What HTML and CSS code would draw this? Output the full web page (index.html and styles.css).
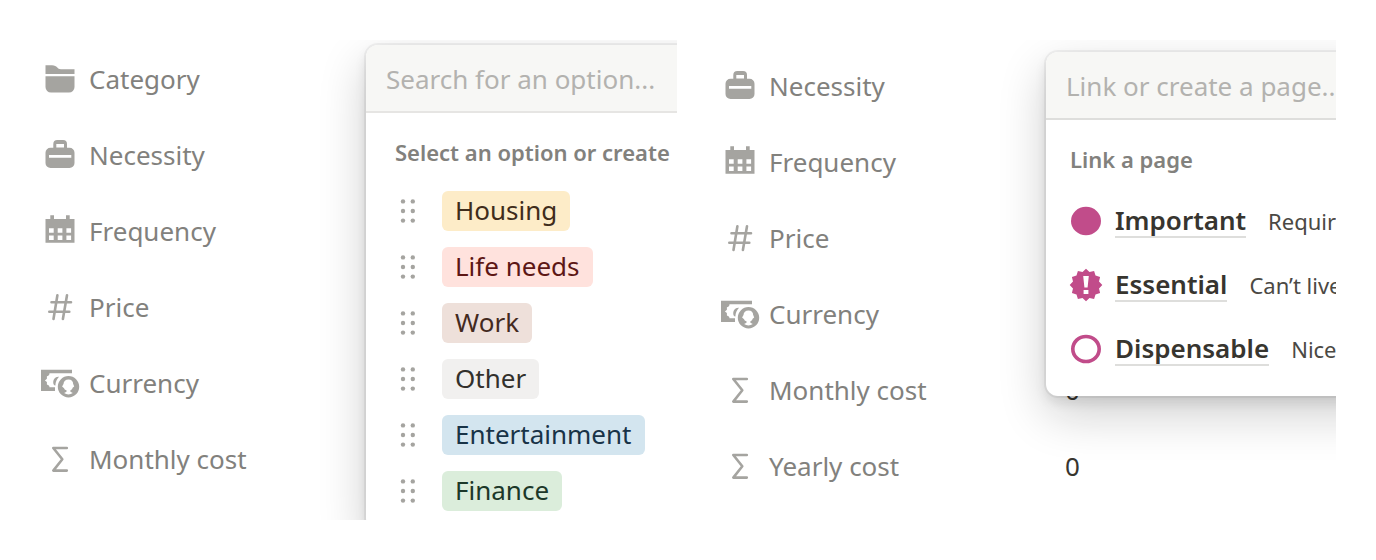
FILE: index.html
```
<!DOCTYPE html>
<html lang="en">
<head>
    <meta charset="UTF-8">
    <meta name="viewport" content="width=device-width, initial-scale=1.0">
    <title>Expense properties</title>
    <link rel="stylesheet" href="styles.css">
</head>
<body>
    <!-- Icons shared by both panels -->
    <svg class="sprite" aria-hidden="true">
        <symbol id="icon-folder" viewBox="0 0 40 40">
            <path d="M5.5 5.3H12c5.500 0 5 4 9 4h13.500V14h-29z"/>
            <path d="M5.5 16.200h29V27a5.500 5.500 0 0 1-5.500 5.500H11A5.500 5.500 0 0 1 5.500 27z"/>
        </symbol>
        <symbol id="icon-briefcase" viewBox="0 0 40 40">
            <path fill-rule="evenodd" d="M13.300 11.700V8a4 4 0 0 1 4-4H23a4 4 0 0 1 4 4v3.700h2.500a5 5 0 0 1 5 5V27a5 5 0 0 1-5 5h-19a5 5 0 0 1-5-5V16.700a5 5 0 0 1 5-5zM16.300 8v3.500h7.700V8zM9 19v2.700h22.300V19z"/>
        </symbol>
        <symbol id="icon-calendar" viewBox="0 0 40 40">
            <path fill-rule="evenodd" d="M5.500 7h4.800V3.200H14V7h12V3.200h3.700V7h4.800v23.700h-29zM9 16.200v4.500h4.700v-4.500zM17.700 16.200v4.500h4.700v-4.500zM26.400 16.200v4.500h4.700v-4.500zM9 23.600v4.400h4.700v-4.400zM17.700 23.600v4.400h4.700v-4.400zM26.400 23.600v4.400h4.700v-4.400z"/>
        </symbol>
        <symbol id="icon-hash" viewBox="0 0 40 40">
            <path class="line" d="M11.500 14.200H31M9.300 23.700H29.300M17.400 7.300 13.500 31M27 7.300 22.900 31"/>
        </symbol>
        <symbol id="icon-money" viewBox="0 0 40 40">
            <path fill-rule="evenodd" d="M1 5.700h31v3.600H9.500c0 1.700-1 2.700-2.600 3v2.400l-2 1.700 2 1.700v2.300c1.600.4 2.600 1.300 2.600 2.900h5.500v3.700H1z"/>
            <path d="M19 12.700c-3.500-.5-6.500 2.500-5.600 7 .3 1.200 1.200 1.700 2 1.800.1-3.300 1.300-6.500 3.600-8.800z"/>
            <path fill-rule="evenodd" d="M28.500 12a10.700 10.700 0 1 1 0 21.400 10.700 10.700 0 0 1 0-21.400zm0 3.400c-3 0-5 2-5 4.600l-1.400 2.500 2 1.800c.5 1.400 1.400 1.800 2.400 2v1.400l-2.400 1.400c2.700 1.700 6 1.700 8.700 0l-2.400-1.400v-1.500c1.400-.5 2-1.400 2.200-2.400l1.600-1.300-1-2.500c0-2.600-1.700-4.600-4.700-4.600z"/>
        </symbol>
        <symbol id="icon-sigma" viewBox="0 0 40 40">
            <path class="line" d="M26.800 8H13.300l9 11.300-9 11.300h13.500"/>
        </symbol>
        <symbol id="icon-handle" viewBox="0 0 16 26">
            <circle cx="3" cy="3.400" r="2.200"/><circle cx="12.800" cy="3.400" r="2.200"/>
            <circle cx="3" cy="13" r="2.200"/><circle cx="12.800" cy="13" r="2.200"/>
            <circle cx="3" cy="22.600" r="2.200"/><circle cx="12.800" cy="22.600" r="2.200"/>
        </symbol>
    </svg>

    <main class="panels">
        <section class="panel">
            <ul class="properties">
                <li class="property"><svg class="icon"><use href="#icon-folder"/></svg>Category</li>
                <li class="property"><svg class="icon"><use href="#icon-briefcase"/></svg>Necessity</li>
                <li class="property"><svg class="icon"><use href="#icon-calendar"/></svg>Frequency</li>
                <li class="property"><svg class="icon"><use href="#icon-hash"/></svg>Price</li>
                <li class="property"><svg class="icon"><use href="#icon-money"/></svg>Currency</li>
                <li class="property"><svg class="icon"><use href="#icon-sigma"/></svg>Monthly cost</li>
            </ul>

            <div class="popover">
                <input class="search" type="text" placeholder="Search for an option..." aria-label="Search for an option">
                <div class="popover-body options-body">
                    <h2 class="popover-title">Select an option or create</h2>
                    <ul class="options">
                        <li class="option">
                            <button class="handle" type="button" aria-label="Move Housing"><svg><use href="#icon-handle"/></svg></button>
                            <span class="tag yellow">Housing</span>
                        </li>
                        <li class="option">
                            <button class="handle" type="button" aria-label="Move Life needs"><svg><use href="#icon-handle"/></svg></button>
                            <span class="tag red">Life needs</span>
                        </li>
                        <li class="option">
                            <button class="handle" type="button" aria-label="Move Work"><svg><use href="#icon-handle"/></svg></button>
                            <span class="tag brown">Work</span>
                        </li>
                        <li class="option">
                            <button class="handle" type="button" aria-label="Move Other"><svg><use href="#icon-handle"/></svg></button>
                            <span class="tag gray">Other</span>
                        </li>
                        <li class="option">
                            <button class="handle" type="button" aria-label="Move Entertainment"><svg><use href="#icon-handle"/></svg></button>
                            <span class="tag blue">Entertainment</span>
                        </li>
                        <li class="option">
                            <button class="handle" type="button" aria-label="Move Finance"><svg><use href="#icon-handle"/></svg></button>
                            <span class="tag green">Finance</span>
                        </li>
                    </ul>
                </div>
            </div>
        </section>

        <section class="panel panel-link">
            <ul class="properties">
                <li class="property"><svg class="icon"><use href="#icon-briefcase"/></svg>Necessity</li>
                <li class="property"><svg class="icon"><use href="#icon-calendar"/></svg>Frequency</li>
                <li class="property"><svg class="icon"><use href="#icon-hash"/></svg>Price</li>
                <li class="property"><svg class="icon"><use href="#icon-money"/></svg>Currency</li>
                <li class="property"><svg class="icon"><use href="#icon-sigma"/></svg>Monthly cost <span class="value">0</span></li>
                <li class="property"><svg class="icon"><use href="#icon-sigma"/></svg>Yearly cost <span class="value">0</span></li>
            </ul>

            <div class="popover popover-link">
                <input class="search" type="text" placeholder="Link or create a page..." aria-label="Link or create a page">
                <div class="popover-body">
                    <h2 class="popover-title">Link a page</h2>
                    <ul class="pages">
                        <li class="page">
                            <svg class="page-icon" viewBox="0 0 34 34"><ellipse cx="17" cy="17" rx="15" ry="14.300"/></svg>
                            <a class="page-link" href="#">Important</a>
                            <span class="note">Requir</span>
                        </li>
                        <li class="page">
                            <svg class="page-icon" viewBox="0 0 34 34">
                                <path d="M17 .7 20.500 4 25.100 2.900 26.500 7.500 31.100 8.900 30 13.500 33.300 17 30 20.500 31.100 25.100 26.500 26.500 25.100 31.100 20.500 30 17 33.300 13.500 30 8.900 31.100 7.500 26.500 2.900 25.100 4 20.500.7 17 4 13.500 2.900 8.900 7.500 7.500 8.900 2.900 13.500 4z"/>
                                <path class="mark" d="M14.200 8h5.600l-1.200 11.500h-3.200zM14.600 22h4.800v4h-4.800z"/>
                            </svg>
                            <a class="page-link" href="#">Essential</a>
                            <span class="note">Can’t live</span>
                        </li>
                        <li class="page">
                            <svg class="page-icon" viewBox="0 0 34 34"><ellipse class="ring" cx="17" cy="17" rx="13.200" ry="12.500"/></svg>
                            <a class="page-link" href="#">Dispensable</a>
                            <span class="note">Nice</span>
                        </li>
                    </ul>
                </div>
            </div>
        </section>
    </main>
</body>
</html>
```
FILE: styles.css
```
* {
    box-sizing: border-box;
}

body {
    margin: 0;
    background-color: #fff;
    color: #37352f;
    font-family: "Noto Sans", "Open Sans", sans-serif;
    font-size: 26px;
    line-height: 38px;
}

ul {
    list-style: none;
    margin: 0;
    padding: 0;
}

.sprite {
    display: none;
}

.panels {
    display: grid;
    grid-template-columns: 677fr 656fr;
    gap: 3px;
    padding: 40px 40px 40px 0;
}

.panel {
    position: relative;
    overflow: hidden;
    padding: 2px 0 22px 40px;
    white-space: nowrap;
}

.panel-link {
    padding: 9px 0 15px 40px;
}

/* Property list */
.property {
    display: flex;
    align-items: center;
    gap: 9px;
    height: 76px;
    padding-bottom: 2px;
    color: #82817d;
}

.icon {
    width: 40px;
    height: 40px;
    margin-top: 2px;
    fill: #a5a4a0;
}

.line {
    fill: none;
    stroke: #a5a4a0;
    stroke-width: 2.6;
    stroke-linecap: round;
    stroke-linejoin: round;
}

.property:has(.value) {
    display: grid;
    grid-template-columns: 40px 287px 1fr;
}

.value {
    color: #37352f;
}

/* Popovers */
.popover {
    position: absolute;
    top: 5px;
    left: 366px;
    right: -60px;
    overflow: hidden;
    border-radius: 12px;
    background-color: #fff;
    box-shadow: 0 0 0 2px rgba(15, 15, 15, 0.05),
        0 6px 12px rgba(15, 15, 15, 0.1),
        0 18px 48px rgba(15, 15, 15, 0.2);
}

.popover-link {
    top: 12px;
}

.search {
    display: block;
    width: 100%;
    height: 68px;
    padding: 2px 20px 0;
    border: 0;
    border-bottom: 2px solid #e6e5e3;
    outline: none;
    background-color: #f7f7f5;
    color: #37352f;
    font: inherit;
}

.popover-link .search {
    border-bottom-color: #dededc;
}

.search::placeholder {
    color: #b3b2af;
    opacity: 1;
}

.popover-body {
    padding: 19px 24px 15px;
}

.options-body {
    padding: 19px 29px;
}

.popover-title {
    margin: 0 0 10px;
    color: #82817d;
    font-size: 22px;
    font-weight: 600;
    line-height: 40px;
}

.options-body .popover-title {
    margin-bottom: 19px;
}

.options {
    display: grid;
    gap: 16px;
}

.option {
    display: flex;
    gap: 22px;
}

.handle {
    display: flex;
    align-items: center;
    justify-content: center;
    width: 25px;
    height: 40px;
    padding: 0;
    border: 0;
    background: none;
    cursor: grab;
}

.handle svg {
    width: 16px;
    height: 26px;
    fill: #a5a4a0;
}

.tag {
    padding: 0 13px 2px;
    border-radius: 6px;
}

.yellow {
    background-color: #fdecc8;
    color: #402c1b;
}

.red {
    background-color: #ffe2dd;
    color: #5d1715;
}

.brown {
    background-color: #eee0da;
    color: #442a1e;
}

.gray {
    background-color: #f1f0ef;
    color: #32302c;
}

.blue {
    background-color: #d3e5ef;
    color: #183347;
}

.green {
    background-color: #dbeddb;
    color: #1c3829;
}

.page {
    display: flex;
    align-items: center;
    height: 64px;
}

.page-icon {
    flex-shrink: 0;
    width: 34px;
    height: 34px;
    margin: 0 12px 0 -1px;
    fill: #c14c8a;
}

.mark {
    fill: #fff;
}

.ring {
    fill: none;
    stroke: #c14c8a;
    stroke-width: 3.6;
}

.page-link {
    margin-right: 22px;
    border-bottom: 2px solid #dededc;
    color: #37352f;
    font-weight: 600;
    line-height: 32px;
    text-decoration: none;
}

.note {
    color: #4b4944;
    font-size: 22px;
}
```
